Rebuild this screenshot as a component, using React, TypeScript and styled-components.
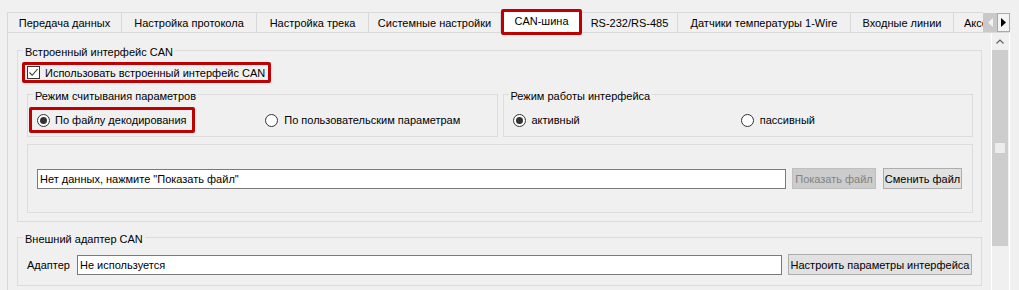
import React from "react";
import styled, { createGlobalStyle } from "styled-components";

const GlobalStyle = createGlobalStyle`
  html, body { margin: 0; padding: 0; background: #f0f0f0; }
  body {
    font-family: "Liberation Sans", Arial, sans-serif;
    font-size: 11px;
    color: #000;
    overflow: hidden;
  }
  #root { width: 1019px; height: 290px; overflow: hidden; }
`;

const RED = "#c00000";

const Page = styled.div`
  width: 1019px;
  height: 290px;
  display: flex;
  flex-direction: column;
  overflow: hidden;
  background: #f0f0f0;
`;

const Header = styled.div`
  display: flex;
  align-items: flex-end;
  height: 32px;
  padding-left: 7px;
  flex: none;
`;

const TabStrip = styled.div`
  display: flex;
  align-items: flex-end;
  flex: none;
`;

const Tab = styled.div<{ $w: number; $first?: boolean; $clip?: boolean }>`
  box-sizing: border-box;
  width: ${(p) => p.$w}px;
  flex: none;
  height: 20px;
  border-top: 1px solid #d9d9d9;
  border-right: ${(p) => (p.$clip ? "none" : "1px solid #d9d9d9")};
  border-left: ${(p) => (p.$first ? "1px solid #d9d9d9" : "none")};
  display: flex;
  align-items: center;
  justify-content: ${(p) => (p.$clip ? "flex-start" : "center")};
  padding-left: ${(p) => (p.$clip ? "10px" : "0")};
  white-space: nowrap;
  overflow: hidden;
  background: #f0f0f0;
`;

const ActiveTab = styled.div<{ $w: number }>`
  box-sizing: border-box;
  width: ${(p) => p.$w}px;
  flex: none;
  height: 26px;
  margin-bottom: -3px;
  position: relative;
  z-index: 1;
  border: 3px solid ${RED};
  border-radius: 2px;
  background: #ffffff;
  display: flex;
  align-items: center;
  justify-content: center;
  padding-bottom: 2px;
  white-space: nowrap;
`;

const ScrollButtons = styled.div`
  display: flex;
  height: 19px;
  flex: none;
`;

const ScrollBtn = styled.div<{ $disabled?: boolean }>`
  box-sizing: border-box;
  width: ${(p) => (p.$disabled ? 14 : 13)}px;
  height: 19px;
  flex: none;
  background: ${(p) => (p.$disabled ? "#c9c9c9" : "#f4f4f4")};
  border: 1px solid ${(p) => (p.$disabled ? "#c9c9c9" : "#a9a9a9")};
  display: flex;
  align-items: center;
  justify-content: center;
`;

const Pane = styled.div`
  box-sizing: border-box;
  width: 1003px;
  margin-left: 7px;
  flex: 1;
  border-top: 1px solid #d9d9d9;
  border-left: 1px solid #d9d9d9;
  border-right: 1px solid #ffffff;
  display: flex;
  overflow: hidden;
`;

const Content = styled.div`
  flex: 1;
  padding: 17px 9px 0 9px;
  display: flex;
  flex-direction: column;
`;

const ScrollBar = styled.div`
  width: 16px;
  border-left: 1px solid #ffffff;
  margin-right: 1px;
  display: flex;
  flex-direction: column;
`;

const ScrollUp = styled.div`
  height: 17px;
  display: flex;
  align-items: center;
  justify-content: center;
`;

const ScrollThumb = styled.div`
  height: 196px;
  background: #cdcdcd;
  display: flex;
  align-items: center;
  justify-content: center;
`;

const ThumbGrip = styled.div`
  width: 10px;
  height: 10px;
  background: #ececec;
`;

const GroupBox = styled.div<{ $mt?: number; $flex?: boolean }>`
  border: 1px solid #dcdcdc;
  display: flex;
  flex-direction: column;
  margin-top: ${(p) => p.$mt ?? 0}px;
  flex: ${(p) => (p.$flex ? "1 1 0" : "none")};
  min-width: 0;
`;

const GroupTitle = styled.span`
  align-self: flex-start;
  margin: -6px 0 0 5px;
  padding: 0 2px;
  background: #f0f0f0;
  line-height: 14px;
  height: 14px;
  white-space: nowrap;
`;

const GroupBody = styled.div<{ $pad: string }>`
  display: flex;
  flex-direction: column;
  padding: ${(p) => p.$pad};
`;

const Highlight = styled.div<{ $ml: number; $pad: string; $stretch?: boolean }>`
  align-self: ${(p) => (p.$stretch ? "stretch" : "flex-start")};
  display: flex;
  align-items: center;
  gap: 5px;
  margin-left: ${(p) => p.$ml}px;
  padding: ${(p) => p.$pad};
  border: 3px solid ${RED};
  border-radius: 2px;
  white-space: nowrap;
`;

const CheckBox = styled.span`
  box-sizing: border-box;
  width: 13px;
  height: 13px;
  border: 1px solid #333333;
  background: #ffffff;
  display: flex;
  align-items: center;
  justify-content: center;
  flex: none;
`;

const ModeRow = styled.div`
  display: flex;
  gap: 5px;
  margin-top: 11px;
`;

const RadioRow = styled.div`
  display: flex;
  gap: 6px;
  height: 26px;
  margin-top: 4px;
  padding: 0 9px 3px 9px;
`;

const RadioCell = styled.div`
  flex: 1 1 0;
  display: flex;
  align-items: center;
  min-width: 0;
`;

const RadioItem = styled.div`
  display: flex;
  align-items: center;
  gap: 6px;
  white-space: nowrap;
`;

const Radio = styled.span<{ $checked?: boolean }>`
  box-sizing: border-box;
  width: 13px;
  height: 13px;
  border-radius: 50%;
  border: 1px solid #333333;
  background: #ffffff;
  display: flex;
  align-items: center;
  justify-content: center;
  flex: none;
  &::after {
    content: "";
    width: 7px;
    height: 7px;
    border-radius: 50%;
    background: ${(p) => (p.$checked ? "#333333" : "transparent")};
  }
`;

const FieldRow = styled.div<{ $h: number; $pad: string; $mt?: number; $mb?: number }>`
  display: flex;
  align-items: center;
  height: ${(p) => p.$h}px;
  padding: ${(p) => p.$pad};
  margin-top: ${(p) => p.$mt ?? 0}px;
  margin-bottom: ${(p) => p.$mb ?? 0}px;
`;

const Label = styled.span<{ $w: number }>`
  width: ${(p) => p.$w}px;
  flex: none;
  white-space: nowrap;
`;

const TextField = styled.input`
  box-sizing: border-box;
  flex: 1;
  min-width: 0;
  height: 20px;
  margin: 0;
  border: 1px solid #7a7a7a;
  background: #ffffff;
  padding: 0 2px;
  font: inherit;
  color: #000;
  outline: none;
`;

const Button = styled.button<{ $w: number; $ml: number; $disabled?: boolean }>`
  box-sizing: border-box;
  width: ${(p) => p.$w}px;
  height: 21px;
  margin: 0 0 0 ${(p) => p.$ml}px;
  padding: 0;
  flex: none;
  font: inherit;
  white-space: nowrap;
  border: 1px solid ${(p) => (p.$disabled ? "#bfbfbf" : "#adadad")};
  background: ${(p) => (p.$disabled ? "#cccccc" : "#e1e1e1")};
  color: ${(p) => (p.$disabled ? "#838383" : "#000")};
`;

const tabs = [
  { label: "Передача данных", w: 115 },
  { label: "Настройка протокола", w: 135 },
  { label: "Настройка трека", w: 112 },
  { label: "Системные настройки", w: 132 },
  { label: "CAN-шина", w: 81, active: true },
  { label: "RS-232/RS-485", w: 96 },
  { label: "Датчики температуры 1-Wire", w: 173 },
  { label: "Входные линии", w: 103 },
  { label: "Аксессуары", w: 29, clip: true },
];

export default function App() {
  return (
    <>
      <GlobalStyle />
      <Page>
        <Header>
          <TabStrip>
            {tabs.map((t, i) =>
              t.active ? (
                <ActiveTab key={t.label} $w={t.w}>
                  {t.label}
                </ActiveTab>
              ) : (
                <Tab key={t.label} $w={t.w} $first={i === 0} $clip={t.clip}>
                  {t.label}
                </Tab>
              )
            )}
          </TabStrip>
          <ScrollButtons>
            <ScrollBtn $disabled>
              <svg width="5" height="9" viewBox="0 0 5 9">
                <path d="M5 0 L0 4.5 L5 9 Z" fill="#f2f2f2" />
              </svg>
            </ScrollBtn>
            <ScrollBtn>
              <svg width="5" height="9" viewBox="0 0 5 9">
                <path d="M0 0 L5 4.5 L0 9 Z" fill="#000" />
              </svg>
            </ScrollBtn>
          </ScrollButtons>
        </Header>
        <Pane>
          <Content>
            <GroupBox>
              <GroupTitle>Встроенный интерфейс CAN</GroupTitle>
              <GroupBody $pad="3px 8px 8px 9px">
                <Highlight $ml={-5} $pad="1px 3px 1px 2px">
                  <CheckBox>
                    <svg width="11" height="11" viewBox="0 0 11 11">
                      <path d="M1.5 5.5 L4.2 8.3 L9.6 2" fill="none" stroke="#333" strokeWidth="1.1" />
                    </svg>
                  </CheckBox>
                  <span>Использовать встроенный интерфейс CAN</span>
                </Highlight>
                <ModeRow>
                  <GroupBox $flex>
                    <GroupTitle>Режим считывания параметров</GroupTitle>
                    <RadioRow>
                      <RadioCell>
                        <Highlight $ml={-8} $pad="0 5px 0 5px" $stretch>
                          <Radio $checked />
                          <span>По файлу декодирования</span>
                        </Highlight>
                      </RadioCell>
                      <RadioCell>
                        <RadioItem>
                          <Radio />
                          <span>По пользовательским параметрам</span>
                        </RadioItem>
                      </RadioCell>
                    </RadioRow>
                  </GroupBox>
                  <GroupBox $flex>
                    <GroupTitle>Режим работы интерфейса</GroupTitle>
                    <RadioRow>
                      <RadioCell>
                        <RadioItem>
                          <Radio $checked />
                          <span>активный</span>
                        </RadioItem>
                      </RadioCell>
                      <RadioCell>
                        <RadioItem>
                          <Radio />
                          <span>пассивный</span>
                        </RadioItem>
                      </RadioCell>
                    </RadioRow>
                  </GroupBox>
                </ModeRow>
                <GroupBox $mt={7}>
                  <FieldRow $h={67} $pad="0 10px 0 9px">
                    <TextField readOnly value={'Нет данных, нажмите "Показать файл"'} />
                    <Button $w={84} $ml={6} $disabled disabled>
                      Показать файл
                    </Button>
                    <Button $w={79} $ml={7}>
                      Сменить файл
                    </Button>
                  </FieldRow>
                </GroupBox>
              </GroupBody>
            </GroupBox>
            <GroupBox $mt={15}>
              <GroupTitle>Внешний адаптер CAN</GroupTitle>
              <FieldRow $h={21} $pad="0 9px 0 9px" $mt={8} $mb={10}>
                <Label $w={50}>Адаптер</Label>
                <TextField readOnly value="Не используется" />
                <Button $w={184} $ml={6}>
                  Настроить параметры интерфейса
                </Button>
              </FieldRow>
            </GroupBox>
          </Content>
          <ScrollBar>
            <ScrollUp>
              <svg width="8" height="5" viewBox="0 0 8 5">
                <path d="M0.5 4.5 L4 1 L7.5 4.5" fill="none" stroke="#606060" strokeWidth="1.2" />
              </svg>
            </ScrollUp>
            <ScrollThumb>
              <ThumbGrip />
            </ScrollThumb>
          </ScrollBar>
        </Pane>
      </Page>
    </>
  );
}
